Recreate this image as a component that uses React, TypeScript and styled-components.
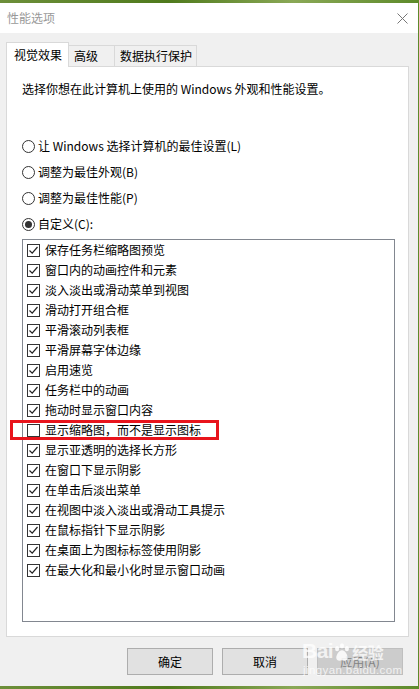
import React from "react";
import styled, { createGlobalStyle } from "styled-components";

const Global = createGlobalStyle`
  html, body { margin: 0; padding: 0; }
  body {
    width: 419px; height: 689px; overflow: hidden;
    background: linear-gradient(90deg, #6d8f3a 0%, #4f7a1c 40%, #8aa856 70%, #5d8a2a 100%);
    font-family: "Noto Sans CJK SC", "Microsoft YaHei", sans-serif;
    font-size: 12px; color: #000;
  }
`;

const Desktop = styled.div`
  width: 419px; height: 689px;
  padding: 3px 2px 3px 0;
  box-sizing: border-box;
  display: flex;
`;

const Window = styled.div`
  flex: 1;
  background: #f0f0f0;
  display: flex; flex-direction: column;
  position: relative;
`;

const TitleBar = styled.div`
  height: 30px; background: #fff;
  display: flex; align-items: center; justify-content: space-between;
  padding: 0 10px 0 7px;
`;

const Title = styled.span`
  color: #999; font-size: 12px; line-height: 16px;
`;

const Close = styled.svg`
  width: 11px; height: 11px;
`;

const Body = styled.div`
  flex: 1; display: flex; flex-direction: column;
  padding: 9px 9px 0 6px;
`;

const Tabs = styled.div`
  display: flex; align-items: flex-end; height: 25px;
  position: relative; z-index: 1; margin-bottom: -1px;
`;

const Tab = styled.div<{ $active?: boolean; $w: number }>`
  box-sizing: border-box;
  width: ${p => p.$w}px;
  height: ${p => (p.$active ? 25 : 22)}px;
  padding: ${p => (p.$active ? "0 0 1px 7px" : "0 0 0 5px")};
  border: 1px solid #d9d9d9;
  border-bottom: ${p => (p.$active ? "none" : "1px solid #d9d9d9")};
  border-left: ${p => (p.$active ? "1px solid #d9d9d9" : "none")};
  background: ${p => (p.$active ? "#fff" : "#f0f0f0")};
  display: flex; align-items: center; line-height: 16px;
  white-space: nowrap;
`;

const Panel = styled.div`
  box-sizing: border-box;
  height: 571px;
  background: #fff; border: 1px solid #d9d9d9;
  padding: 14px 13px 0 15px;
  display: flex; flex-direction: column;
`;

const Desc = styled.div`
  line-height: 16px; margin-bottom: 41px;
`;

const RadioGroup = styled.div`
  display: flex; flex-direction: column; gap: 10px;
`;

const RadioRow = styled.label`
  display: flex; align-items: center; gap: 3px;
  height: 16px; line-height: 16px;
`;

const RadioCircle = styled.span<{ $on?: boolean }>`
  box-sizing: border-box;
  width: 13px; height: 13px; border-radius: 50%;
  border: 1px solid #333; background: #fff;
  display: flex; align-items: center; justify-content: center;
  &::after {
    content: "";
    width: 7px; height: 7px; border-radius: 50%;
    background: ${p => (p.$on ? "#333" : "transparent")};
  }
`;

const ListBox = styled.div`
  box-sizing: border-box;
  margin-top: 7px;
  width: 373px; height: 383px;
  border: 1px solid #828790;
  padding: 0 0 0 4px;
  display: flex; flex-direction: column;
`;

const Item = styled.div<{ $hl?: boolean }>`
  box-sizing: border-box;
  height: 20px; flex: none; display: flex; align-items: center; gap: 5px;
  position: relative;
  ${p =>
    p.$hl
      ? `&::before { content: ""; position: absolute; left: -17px; top: 0px; width: 203px; height: 14px; border: 3px solid #e8141c; }`
      : ""}
`;

const Box = styled.span`
  box-sizing: border-box; width: 13px; height: 13px;
  border: 1px solid #333; background: #fff;
  display: flex; align-items: center; justify-content: center;
`;

const ItemText = styled.span`
  line-height: 16px; white-space: nowrap;
`;

const Buttons = styled.div`
  display: flex; justify-content: flex-end; gap: 9px;
  padding: 11px 6px 0 0;
`;

const Button = styled.div<{ $disabled?: boolean }>`
  box-sizing: border-box; width: 86px; height: 27px;
  border: 1px solid ${p => (p.$disabled ? "#bfbfbf" : "#adadad")};
  background: ${p => (p.$disabled ? "#cccccc" : "#e1e1e1")};
  color: ${p => (p.$disabled ? "#838383" : "#000")};
  display: flex; align-items: center; justify-content: center;
  line-height: 16px;
`;

const Watermark = styled.div`
  position: absolute; left: 302px; top: 636px;
  color: rgba(255, 255, 255, 0.75);
  display: flex; flex-direction: column; align-items: flex-start;
  pointer-events: none;
`;

const WmTop = styled.div`
  font-family: "Liberation Sans", sans-serif; font-weight: bold;
  font-size: 21px; line-height: 24px; letter-spacing: -0.5px;
  display: flex; align-items: flex-end;
`;

const WmCn = styled.span`
  font-family: "Noto Sans CJK SC", sans-serif; font-size: 16px; line-height: 22px;
  font-weight: bold; margin-left: 1px;
`;

const WmBottom = styled.div`
  font-family: "Liberation Sans", sans-serif; font-size: 11.5px; line-height: 14px; letter-spacing: 0.4px;
  margin-left: 1px;
`;

const Check = () => (
  <svg width="11" height="11" viewBox="0 0 11 11">
    <path d="M1.5 5.5 L4.2 8.2 L9.5 2" fill="none" stroke="#222" strokeWidth="1.2" />
  </svg>
);

const items: [string, boolean][] = [
  ["保存任务栏缩略图预览", true],
  ["窗口内的动画控件和元素", true],
  ["淡入淡出或滑动菜单到视图", true],
  ["滑动打开组合框", true],
  ["平滑滚动列表框", true],
  ["平滑屏幕字体边缘", true],
  ["启用速览", true],
  ["任务栏中的动画", true],
  ["拖动时显示窗口内容", true],
  ["显示缩略图，而不是显示图标", false],
  ["显示亚透明的选择长方形", true],
  ["在窗口下显示阴影", true],
  ["在单击后淡出菜单", true],
  ["在视图中淡入淡出或滑动工具提示", true],
  ["在鼠标指针下显示阴影", true],
  ["在桌面上为图标标签使用阴影", true],
  ["在最大化和最小化时显示窗口动画", true],
];

const radios: [string, boolean][] = [
  ["让 Windows 选择计算机的最佳设置(L)", false],
  ["调整为最佳外观(B)", false],
  ["调整为最佳性能(P)", false],
  ["自定义(C):", true],
];

export default function App() {
  return (
    <>
      <Global />
      <Desktop>
        <Window>
          <TitleBar>
            <Title>性能选项</Title>
            <Close viewBox="0 0 11 11">
              <path d="M0.5 0.5 L10.5 10.5 M10.5 0.5 L0.5 10.5" stroke="#777" strokeWidth="1" />
            </Close>
          </TitleBar>
          <Body>
            <Tabs>
              <Tab $active $w={63}>视觉效果</Tab>
              <Tab $w={46}>高级</Tab>
              <Tab $w={82}>数据执行保护</Tab>
            </Tabs>
            <Panel>
              <Desc>选择你想在此计算机上使用的 Windows 外观和性能设置。</Desc>
              <RadioGroup>
                {radios.map(([t, on]) => (
                  <RadioRow key={t}>
                    <RadioCircle $on={on} />
                    <span>{t}</span>
                  </RadioRow>
                ))}
              </RadioGroup>
              <ListBox>
                {items.map(([t, on], i) => (
                  <Item key={t} $hl={i === 9}>
                    <Box>{on && <Check />}</Box>
                    <ItemText>{t}</ItemText>
                  </Item>
                ))}
              </ListBox>
            </Panel>
            <Buttons>
              <Button>确定</Button>
              <Button>取消</Button>
              <Button $disabled>应用(A)</Button>
            </Buttons>
          </Body>
          <Watermark>
            <WmTop>
              Bai
              <svg width="18" height="22" viewBox="0 0 22 24">
                <g fill="rgba(255,255,255,0.85)">
                  <ellipse cx="5" cy="8" rx="2.5" ry="3.2" />
                  <ellipse cx="11" cy="4.5" rx="2.5" ry="3.2" />
                  <ellipse cx="17" cy="8" rx="2.5" ry="3.2" />
                  <path d="M11 10 C7 10 4 16 4 19 C4 23 8 23 11 22 C14 23 18 23 18 19 C18 16 15 10 11 10 Z" />
                </g>
              </svg>
              <WmCn>经验</WmCn>
            </WmTop>
            <WmBottom>jingyan.baidu.com</WmBottom>
          </Watermark>
        </Window>
      </Desktop>
    </>
  );
}
